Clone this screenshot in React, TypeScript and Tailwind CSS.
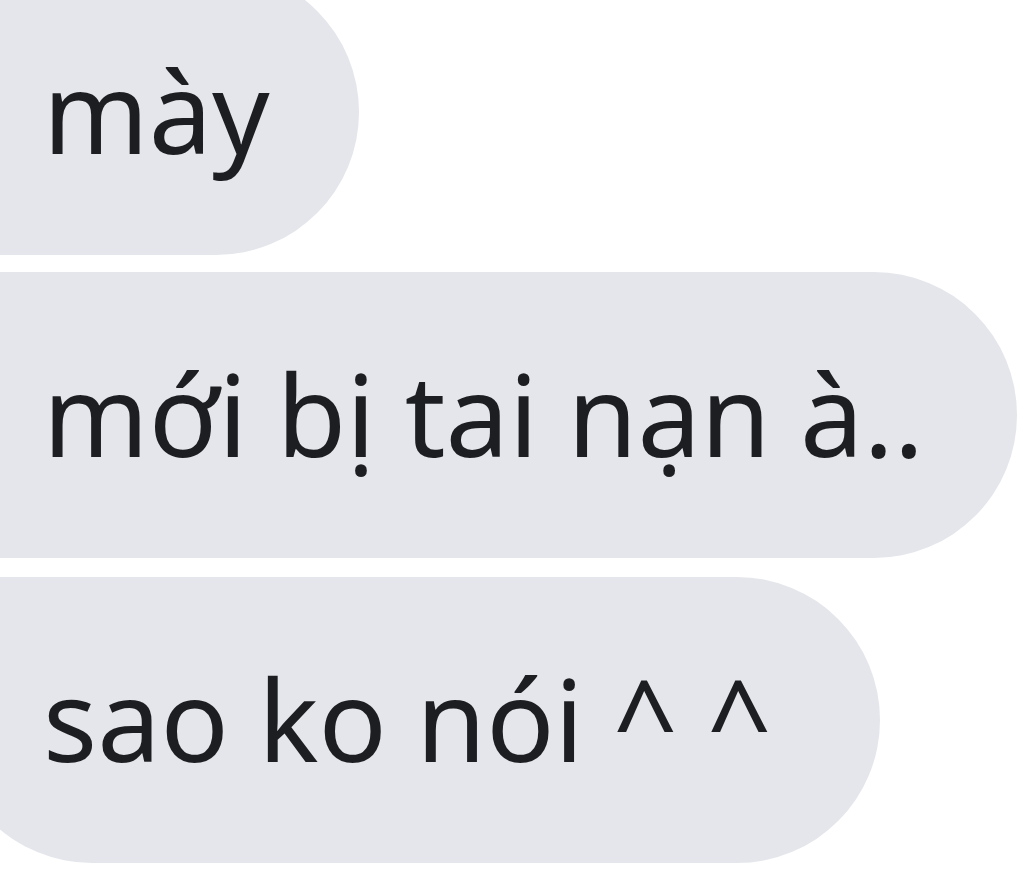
import React from 'react';

const messages = [
  { text: 'mày', corner: 'rounded-tl-[32px] rounded-bl-[32px]', mt: 'mt-[-31px]', pr: 'pr-[89px]' },
  { text: 'mới bị tai nạn à..', corner: 'rounded-tl-[32px] rounded-bl-[32px]', mt: 'mt-[17px]', pr: 'pr-[93px]' },
  { text: 'sao ko nói ^ ^', corner: 'rounded-tl-[32px] rounded-bl-[144px]', mt: 'mt-[19px]', pr: 'pr-[108px]' },
];

const App = () => {
  return (
    <div className="w-[1024px] h-[888px] bg-white overflow-hidden">
      {/* message group, zoomed Messenger bubbles */}
      <div className="flex flex-col items-start -ml-[51px]">
        {messages.map((m, i) => (
          <div
            key={i}
            className={`${m.mt} ${m.corner} ${m.pr} h-[286px] rounded-r-[144px] bg-[#e4e6eb] pl-[94px] flex items-center`}
          >
            <span
              className="text-[113px] leading-none text-[#1c1e21] whitespace-nowrap pb-[4px]"
              style={{ fontFamily: '"Noto Sans", "Open Sans", sans-serif' }}
            >
              {m.text}
            </span>
          </div>
        ))}
      </div>
    </div>
  );
};

export default App;
